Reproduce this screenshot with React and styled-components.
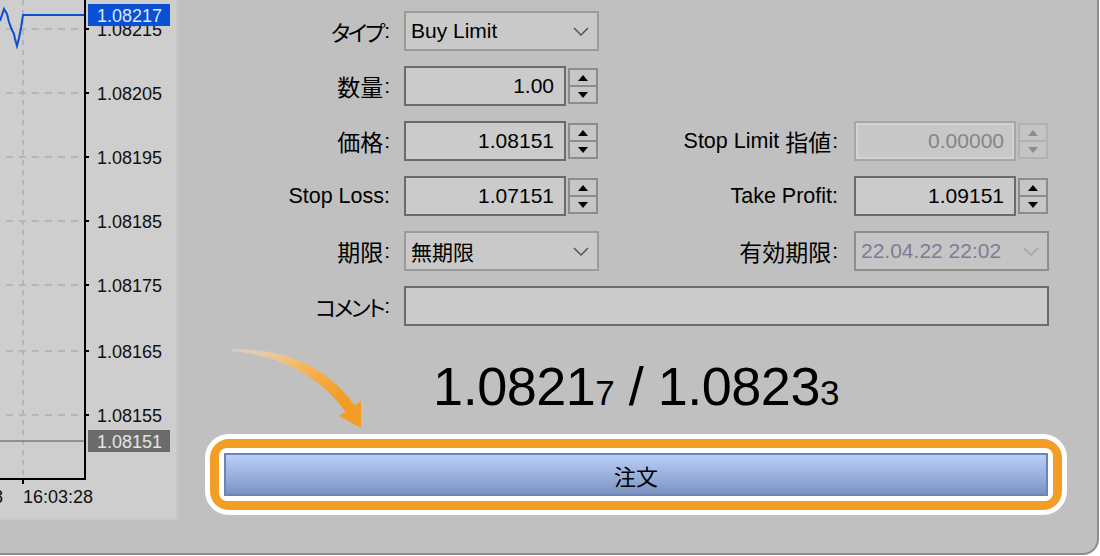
import React from 'react';
import styled, { createGlobalStyle } from 'styled-components';

const Global = createGlobalStyle`
  html, body { margin: 0; padding: 0; background: #ffffff; }
  body { font-family: "Liberation Sans", "Noto Sans CJK JP", sans-serif; color: #000; }
  * { box-sizing: border-box; }
`;

const Window = styled.div`
  width: 1099px;
  height: 555px;
  background: #c0c0c0;
  border-right: 2px solid #8c8c8c;
  border-bottom: 2px solid #8c8c8c;
  border-bottom-right-radius: 16px;
  display: flex;
  align-items: flex-start;
  overflow: hidden;
`;

const ChartPanel = styled.div`
  width: 178px;
  height: 520px;
  flex: none;
  background: #cecece;
  border-right: 2px solid #c8c8c8;
  border-bottom: 2px solid #c8c8c8;
  svg { display: block; }
`;

const Main = styled.div`
  flex: 1;
  position: relative;
  display: flex;
  flex-direction: column;
`;

const Form = styled.div`
  padding-top: 11px;
  display: grid;
  grid-template-columns: 226px 195px 255px 195px;
  grid-auto-rows: 40px;
  row-gap: 15px;
`;

const Label = styled.div`
  display: flex;
  align-items: center;
  justify-content: flex-end;
  padding-right: ${p => p.$pad}px;
  font-size: 21.5px;
  white-space: nowrap;
`;

const Jp = styled.span`
  font-size: ${p => (p.$kana ? 22 : 23)}px;
  font-feature-settings: "palt";
  letter-spacing: ${p => (p.$kana ? -2.2 : 0)}px;
  margin-left: ${p => p.$ml || 0}px;
`;

const Colon = styled.span`
  font-size: 21px;
  margin-left: 1px;
`;

const FieldWrap = styled.div`
  display: flex;
  align-items: center;
  gap: 2px;
  grid-column: ${p => p.$span || 'auto'};
`;

const NumberBox = styled.div`
  width: 162px;
  height: 40px;
  flex: none;
  border: 2px solid ${p => (p.$disabled ? '#a6a6a6' : '#6b6b6b')};
  box-shadow: ${p => (p.$disabled ? 'inset 0 0 0 2px #d3d3d3' : 'none')};
  background: ${p => (p.$disabled ? '#c8c8c8' : '#cbcbcb')};
  color: ${p => (p.$disabled ? '#858585' : '#000')};
  display: flex;
  align-items: center;
  justify-content: flex-end;
  padding-right: 10px;
  font-size: 21px;
`;

const TextBox = styled.div`
  width: 100%;
  height: 40px;
  border: 2px solid #6b6b6b;
  background: #cbcbcb;
`;

const Spinner = styled.div`
  width: 30px;
  height: 36px;
  flex: none;
  display: flex;
  flex-direction: column;
  border: 2px solid ${p => (p.$disabled ? '#b2b2b2' : '#8c8c8c')};
  background: ${p => (p.$disabled ? '#c4c4c4' : '#c6c6c6')};
`;

const SpinHalf = styled.div`
  flex: 1;
  display: flex;
  align-items: center;
  justify-content: center;
  border-top: ${p => (p.$down ? `2px solid ${p.$disabled ? '#b2b2b2' : '#8c8c8c'}` : 'none')};
`;

const Select = styled.div`
  width: 195px;
  height: 40px;
  border: 2px solid ${p => (p.$disabled ? '#8e8e8e' : '#9b9b9b')};
  background: ${p => (p.$disabled ? '#c5c5c5' : '#c9c9c9')};
  color: ${p => (p.$disabled ? '#7c7c98' : '#000')};
  display: flex;
  align-items: center;
  justify-content: space-between;
  padding: 0 8px 0 5px;
  font-size: 21px;
  white-space: nowrap;
`;

const Quote = styled.div`
  margin-top: 30px;
  margin-left: 27px;
  width: 862px;
  height: 60px;
  line-height: 60px;
  text-align: center;
  font-size: 54px;
  white-space: nowrap;
  letter-spacing: -0.5px;
`;

const Small = styled.span`
  font-size: 35px;
`;

const OrderFrame = styled.div`
  margin-top: 18px;
  margin-left: 27px;
  width: 862px;
  border: 5px solid #ffffff;
  background: #f39c26;
  border-radius: 24px;
  padding: 9px;
`;

const OrderInner = styled.div`
  background: #ffffff;
  border-radius: 8px;
  padding: 5px;
`;

const OrderButton = styled.div`
  height: 43px;
  border: 2px solid #6d85b2;
  background: linear-gradient(#bad0f9, #7c92c2);
  display: flex;
  align-items: center;
  justify-content: center;
  font-size: 22px;
`;

const ArrowSvg = styled.svg`
  position: absolute;
  left: 50px;
  top: 344px;
  overflow: visible;
`;

const Tri = ({ down, disabled }) => (
  <svg width="10" height="6" viewBox="0 0 10 6">
    <polygon
      points={down ? '0,0 10,0 5,6' : '0,6 10,6 5,0'}
      fill={disabled ? '#8c8c8c' : '#000'}
    />
  </svg>
);

const Spin = ({ disabled }) => (
  <Spinner $disabled={disabled}>
    <SpinHalf $disabled={disabled}><Tri disabled={disabled} /></SpinHalf>
    <SpinHalf $down $disabled={disabled}><Tri down disabled={disabled} /></SpinHalf>
  </Spinner>
);

const Chevron = ({ color }) => (
  <svg width="16" height="9" viewBox="0 0 16 9">
    <polyline points="1,1 8,8 15,1" fill="none" stroke={color} strokeWidth="1.5" />
  </svg>
);

const priceLabels = [
  [29, '1.08215'],
  [93, '1.08205'],
  [157, '1.08195'],
  [221, '1.08185'],
  [285, '1.08175'],
  [351, '1.08165'],
  [415, '1.08155'],
];

const Chart = () => (
  <svg width="176" height="518" viewBox="0 0 176 518" fontFamily="Liberation Sans, sans-serif" fontSize="18">
    <line x1="23" y1="0" x2="23" y2="478" stroke="#b6b6b6" strokeWidth="2" strokeDasharray="5 5" />
    {priceLabels.map(([y]) => (
      <line key={y} x1="6" y1={y} x2="84" y2={y} stroke="#b6b6b6" strokeWidth="2" strokeDasharray="7 6" />
    ))}
    <line x1="0" y1="441" x2="85" y2="441" stroke="#7a7a7a" strokeWidth="1.5" />
    <polyline
      points="0,21 4,9 7,14 9,22 12,30 14,34 15,39 17,46 19,38 21,28 23,15 85,15"
      fill="none"
      stroke="#0a4fd0"
      strokeWidth="2"
    />
    <line x1="85" y1="0" x2="85" y2="480" stroke="#000" strokeWidth="2" />
    <line x1="0" y1="479" x2="86" y2="479" stroke="#000" strokeWidth="2" />
    <line x1="23" y1="479" x2="23" y2="484" stroke="#000" strokeWidth="2" />
    {priceLabels.map(([y, t]) => (
      <g key={t}>
        <line x1="86" y1={y} x2="89" y2={y} stroke="#000" strokeWidth="2" />
        <text x="97" y={y + 7} fill="#101010">{t}</text>
      </g>
    ))}
    <rect x="88" y="4" width="82" height="22" fill="#0a50d2" />
    <text x="97" y="22" fill="#dde6ff">1.08217</text>
    <rect x="88" y="430" width="82" height="22" fill="#6b6b6b" />
    <text x="97" y="448" fill="#e4e4e4">1.08151</text>
    <text x="-67" y="503" fill="#101010">16:03:28</text>
    <text x="23" y="503" fill="#101010">16:03:28</text>
  </svg>
);

export default function App() {
  return (
    <>
      <Global />
      <Window>
        <ChartPanel>
          <Chart />
        </ChartPanel>
        <Main>
          <Form>
            <Label $pad={14}><Jp $kana>タイプ</Jp><Colon>:</Colon></Label>
            <FieldWrap>
              <Select>
                <span>Buy Limit</span>
                <Chevron color="#555" />
              </Select>
            </FieldWrap>
            <div />
            <div />

            <Label $pad={14}><Jp>数量</Jp><Colon>:</Colon></Label>
            <FieldWrap>
              <NumberBox>1.00</NumberBox>
              <Spin />
            </FieldWrap>
            <div />
            <div />

            <Label $pad={14}><Jp>価格</Jp><Colon>:</Colon></Label>
            <FieldWrap>
              <NumberBox>1.08151</NumberBox>
              <Spin />
            </FieldWrap>
            <Label $pad={16}>Stop Limit<Jp $ml={6}>指値</Jp><Colon>:</Colon></Label>
            <FieldWrap>
              <NumberBox $disabled>0.00000</NumberBox>
              <Spin disabled />
            </FieldWrap>

            <Label $pad={14}>Stop Loss:</Label>
            <FieldWrap>
              <NumberBox>1.07151</NumberBox>
              <Spin />
            </FieldWrap>
            <Label $pad={16}>Take Profit:</Label>
            <FieldWrap>
              <NumberBox>1.09151</NumberBox>
              <Spin />
            </FieldWrap>

            <Label $pad={14}><Jp>期限</Jp><Colon>:</Colon></Label>
            <FieldWrap>
              <Select>
                <span>無期限</span>
                <Chevron color="#555" />
              </Select>
            </FieldWrap>
            <Label $pad={16}><Jp>有効期限</Jp><Colon>:</Colon></Label>
            <FieldWrap>
              <Select $disabled>
                <span>22.04.22 22:02</span>
                <Chevron color="#a4a4a4" />
              </Select>
            </FieldWrap>

            <Label $pad={14}><Jp $kana>コメント</Jp><Colon>:</Colon></Label>
            <FieldWrap $span="2 / 5">
              <TextBox />
            </FieldWrap>
          </Form>

          <Quote>
            1.0821<Small>7</Small> / 1.0823<Small>3</Small>
          </Quote>

          <OrderFrame>
            <OrderInner>
              <OrderButton>注文</OrderButton>
            </OrderInner>
          </OrderFrame>

          <ArrowSvg width="140" height="90" viewBox="0 0 140 90">
            <defs>
              <linearGradient id="arrowGrad" x1="0" y1="0" x2="1" y2="0.6">
                <stop offset="0" stopColor="#fbe2bd" stopOpacity="0.4" />
                <stop offset="0.55" stopColor="#f6b55a" />
                <stop offset="1" stopColor="#f39c26" />
              </linearGradient>
            </defs>
            <path d="M4,5 Q86,4 127,62 L118,68 Q78,14 4,7 Z" fill="url(#arrowGrad)" />
            <polygon points="111,72 133,57 133,84" fill="#f39c26" />
          </ArrowSvg>
        </Main>
      </Window>
    </>
  );
}
